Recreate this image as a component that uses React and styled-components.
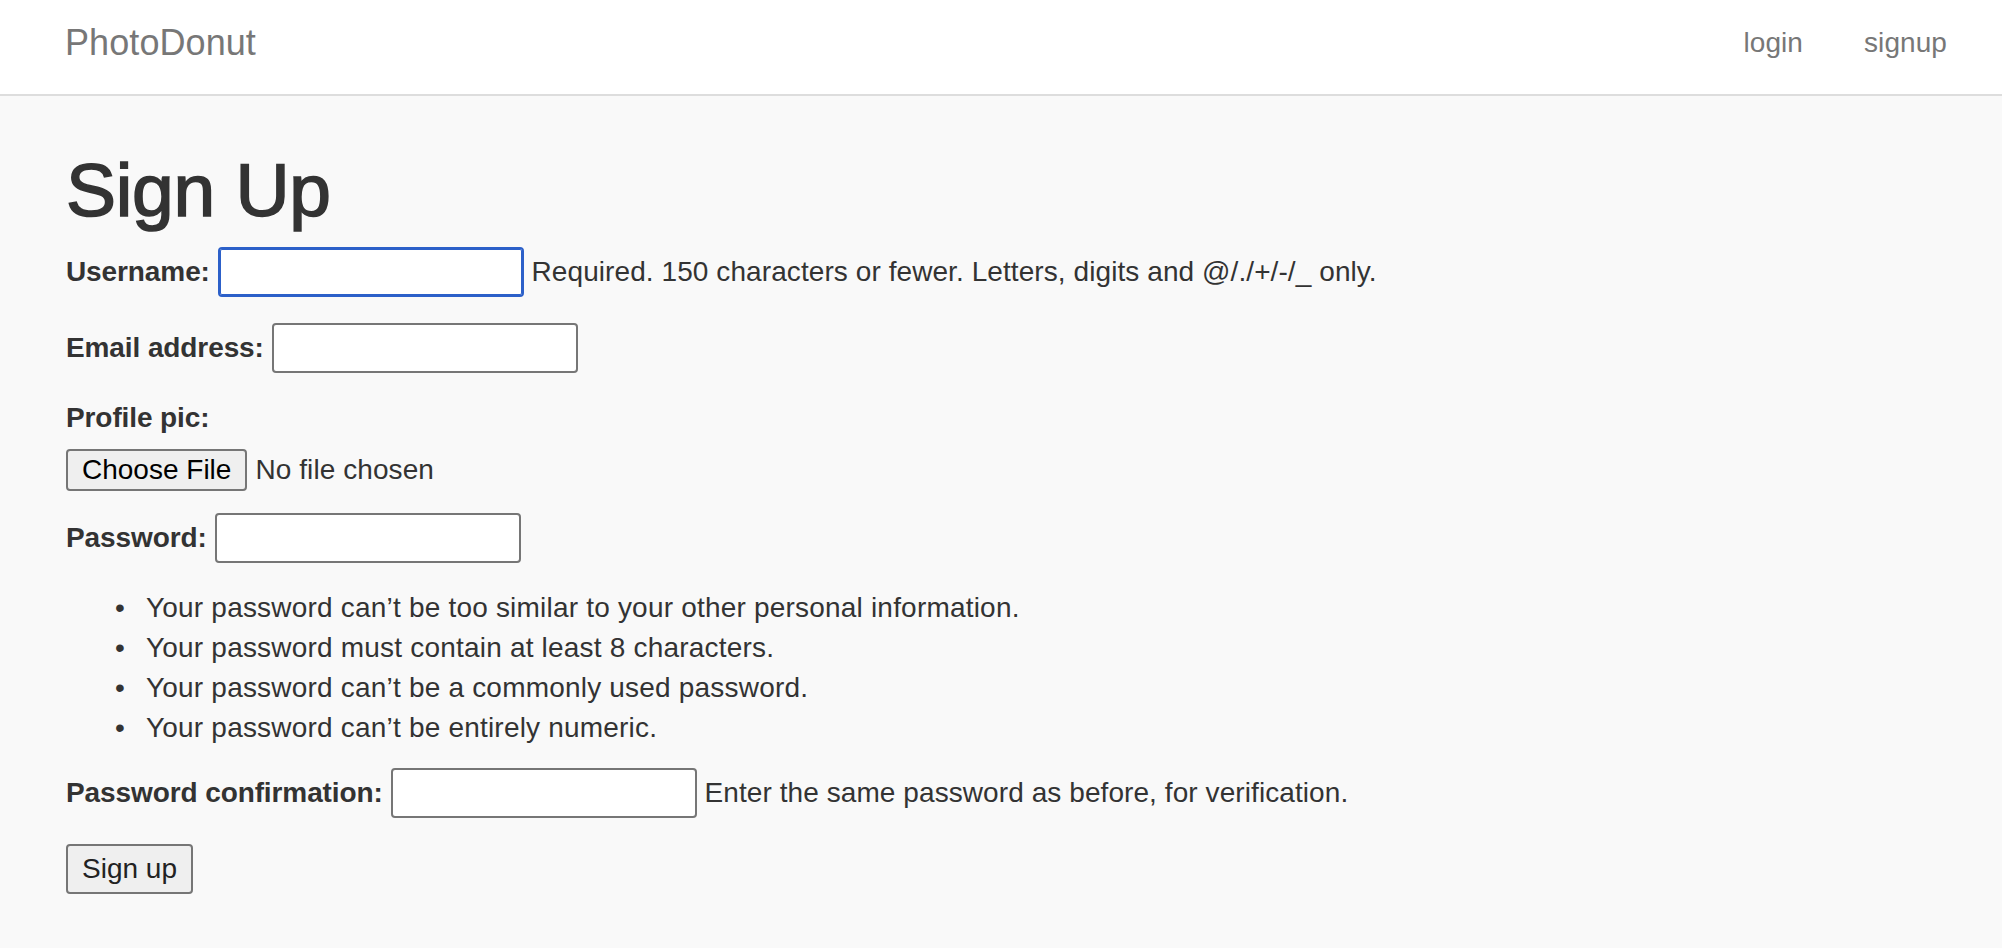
import React from 'react';
import styled, { createGlobalStyle } from 'styled-components';

const GlobalStyle = createGlobalStyle`
  body {
    margin: 0;
    background: #f9f9f9;
    color: #333;
    font-family: "Liberation Sans", Arial, Helvetica, sans-serif;
    font-size: 28px;
    line-height: 40px;
    letter-spacing: 0.08px;
  }
  * {
    box-sizing: border-box;
  }
`;

const Navbar = styled.nav`
  height: 96px;
  display: flex;
  justify-content: space-between;
  align-items: flex-start;
  padding: 23px 55px 0 65px;
  background: #fff;
  border-bottom: 2px solid #dddddd;
`;

const Brand = styled.a`
  font-size: 36px;
  line-height: 40px;
  color: #777;
  text-decoration: none;
`;

const NavLinks = styled.ul`
  display: flex;
  gap: 61px;
  margin: 0;
  padding: 0;
  list-style: none;
`;

const NavLink = styled.a`
  font-size: 28px;
  line-height: 40px;
  color: #777;
  text-decoration: none;
`;

const Container = styled.main`
  padding: 53px 66px 40px;
`;

const Title = styled.h1`
  margin: 0 0 16px;
  font-size: 75px;
  line-height: 82px;
  font-weight: 500;
  color: #333;
  -webkit-text-stroke: 1.6px #333;
  letter-spacing: -0.3px;
`;

const FieldRow = styled.p`
  margin: 0 0 ${props => props.$gap}px;
`;

const Label = styled.label`
  font-weight: bold;
  letter-spacing: -0.1px;
`;

const TextInput = styled.input`
  width: 306px;
  height: 50px;
  padding: 3px 4px;
  font: inherit;
  line-height: 40px;
  background: #fff;
  border: 2px solid ${props => (props.$focused ? '#2c60c9' : '#767676')};
  border-radius: 4px;
  box-shadow: ${props => (props.$focused ? 'inset 0 0 0 1px #2c60c9' : 'none')};
  outline: none;
  vertical-align: baseline;
`;

const FilePicker = styled.div`
  display: flex;
  align-items: center;
  margin: 11px 0 22px;
`;

const NativeButton = styled.button`
  font: inherit;
  line-height: ${props => (props.$tall ? 40 : 32)}px;
  padding: 3px 14px;
  color: ${props => (props.$tall ? '#222' : '#000')};
  background: #efefef;
  border: 2px solid #767676;
  border-radius: 4px;
`;

const FileStatus = styled.span`
  margin-left: 8px;
  color: #333;
`;

const RuleList = styled.ul`
  margin: 0 0 20px;
  padding-left: 80px;
  list-style: none;
  letter-spacing: 0.2px;
`;

const Rule = styled.li`
  &::before {
    content: '•';
    display: inline-block;
    width: 31px;
    margin-left: -31px;
  }
`;

const rules = [
  'Your password can’t be too similar to your other personal information.',
  'Your password must contain at least 8 characters.',
  'Your password can’t be a commonly used password.',
  'Your password can’t be entirely numeric.'
];

function App() {
  return (
    <>
      <GlobalStyle />
      <Navbar>
        <Brand href="#">PhotoDonut</Brand>
        <NavLinks>
          <li><NavLink href="#">login</NavLink></li>
          <li><NavLink href="#">signup</NavLink></li>
        </NavLinks>
      </Navbar>
      <Container>
        <Title>Sign Up</Title>
        <form onSubmit={e => e.preventDefault()}>
          <FieldRow $gap={26}>
            <Label htmlFor="id_username">Username:</Label>{' '}
            <TextInput id="id_username" type="text" $focused />{' '}
            <span>Required. 150 characters or fewer. Letters, digits and @/./+/-/_ only.</span>
          </FieldRow>
          <FieldRow $gap={25}>
            <Label htmlFor="id_email">Email address:</Label>{' '}
            <TextInput id="id_email" type="email" />
          </FieldRow>
          <FieldRow $gap={0}>
            <Label htmlFor="id_pic">Profile pic:</Label>
          </FieldRow>
          <FilePicker>
            <NativeButton type="button">Choose File</NativeButton>
            <FileStatus>No file chosen</FileStatus>
          </FilePicker>
          <FieldRow $gap={25}>
            <Label htmlFor="id_password1">Password:</Label>{' '}
            <TextInput id="id_password1" type="password" />
          </FieldRow>
          <RuleList>
            {rules.map(rule => (
              <Rule key={rule}>{rule}</Rule>
            ))}
          </RuleList>
          <FieldRow $gap={26}>
            <Label htmlFor="id_password2">Password confirmation:</Label>{' '}
            <TextInput id="id_password2" type="password" />{' '}
            <span>Enter the same password as before, for verification.</span>
          </FieldRow>
          <NativeButton type="submit" $tall>Sign up</NativeButton>
        </form>
      </Container>
    </>
  );
}

export default App;
